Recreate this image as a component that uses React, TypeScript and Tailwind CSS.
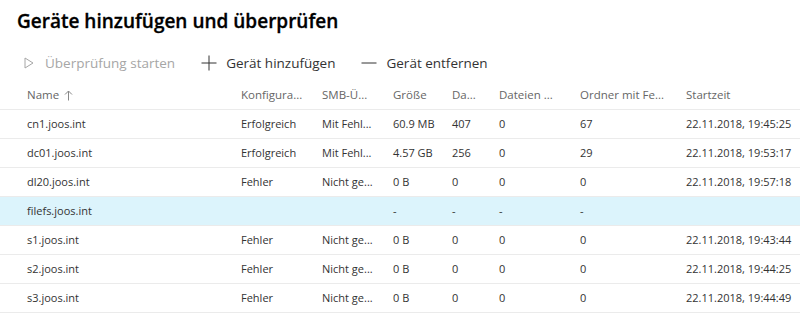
const rows = [
  ["cn1.joos.int", "Erfolgreich", "Mit Fehl...", "60.9 MB", "407", "0", "67", "22.11.2018, 19:45:25"],
  ["dc01.joos.int", "Erfolgreich", "Mit Fehl...", "4.57 GB", "256", "0", "29", "22.11.2018, 19:53:17"],
  ["dl20.joos.int", "Fehler", "Nicht ge...", "0 B", "0", "0", "0", "22.11.2018, 19:57:18"],
  ["filefs.joos.int", "", "", "-", "-", "-", "-", ""],
  ["s1.joos.int", "Fehler", "Nicht ge...", "0 B", "0", "0", "0", "22.11.2018, 19:43:44"],
  ["s2.joos.int", "Fehler", "Nicht ge...", "0 B", "0", "0", "0", "22.11.2018, 19:44:25"],
  ["s3.joos.int", "Fehler", "Nicht ge...", "0 B", "0", "0", "0", "22.11.2018, 19:44:49"],
];

const headers = ["Name", "Konfigura...", "SMB-Ü...", "Größe", "Da...", "Dateien ...", "Ordner mit Fe...", "Startzeit"];

const cols = "grid grid-cols-[214px_81px_71px_59px_47px_81px_106px_1fr] pl-[27px]";

export default function App() {
  return (
    <div className="h-[333px] w-[800px] overflow-hidden bg-white font-['Open_Sans',sans-serif] text-[#333]">
      <h1 className="pl-[17px] pt-[7px] text-[19px] font-semibold leading-[28px] text-black [-webkit-text-stroke:0.3px_black]">
        Geräte hinzufügen und überprüfen
      </h1>

      <div className="mt-[14px] flex h-[28px] items-center pl-[24px] text-[13.5px]">
        <div className="flex items-center text-[#a6a6a6]">
          <svg width="10" height="12" viewBox="0 0 10 12" className="mr-[11px]">
            <path d="M1 1 L9 6 L1 11 Z" fill="none" stroke="currentColor" strokeWidth="1" />
          </svg>
          <span>Überprüfung starten</span>
        </div>
        <div className="ml-[26px] flex items-center">
          <svg width="16" height="16" viewBox="0 0 16 16" className="mr-[9px]">
            <path d="M8 0.5 V15.5 M0.5 8 H15.5" stroke="#333" strokeWidth="1" />
          </svg>
          <span>Gerät hinzufügen</span>
        </div>
        <div className="ml-[26px] flex items-center">
          <svg width="16" height="16" viewBox="0 0 16 16" className="mr-[9px]">
            <path d="M0.5 8 H15.5" stroke="#333" strokeWidth="1" />
          </svg>
          <span>Gerät entfernen</span>
        </div>
      </div>

      <div className={`${cols} mt-[4px] h-[29px] items-center border-b border-[#ebebeb] text-[11.5px] text-[#666]`}>
        {headers.map((h, i) => (
          <div key={i} className="flex items-center whitespace-nowrap">
            {h}
            {i === 0 && (
              <svg width="9" height="11" viewBox="0 0 9 11" className="ml-[5px]">
                <path d="M4.5 10.5 V1 M1 4.5 L4.5 1 L8 4.5" fill="none" stroke="#888" strokeWidth="1" />
              </svg>
            )}
          </div>
        ))}
      </div>

      {rows.map((r, i) => (
        <div
          key={i}
          className={`${cols} h-[29px] items-center border-b border-[#ebebeb] text-[11px] ${
            i === 3 ? "bg-[#dcf4fc]" : ""
          }`}
        >
          {r.map((c, j) => (
            <div key={j} className="whitespace-nowrap">
              {c}
            </div>
          ))}
        </div>
      ))}
    </div>
  );
}
